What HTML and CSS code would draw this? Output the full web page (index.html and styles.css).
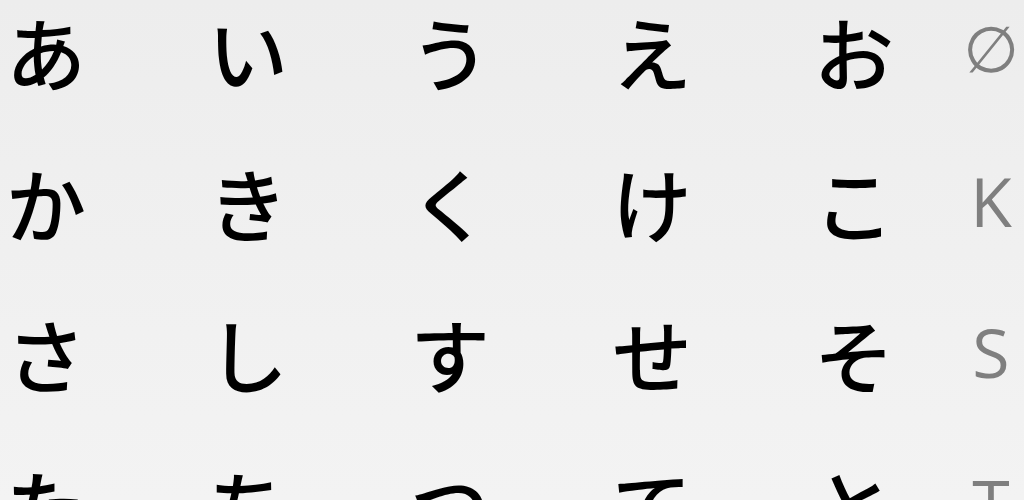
FILE: index.html
```html
<!DOCTYPE html>
<html lang="ja">
<head>
    <meta charset="UTF-8">
    <meta name="viewport" content="width=device-width, initial-scale=1.0">
    <title>Hiragana</title>
    <link rel="stylesheet" href="styles.css">
</head>
<body>
    <div class="kana-grid">
        <div class="row">
            <span class="kana">あ</span>
            <span class="kana">い</span>
            <span class="kana">う</span>
            <span class="kana">え</span>
            <span class="kana">お</span>
            <span class="consonant empty">∅</span>
        </div>
        <div class="row">
            <span class="kana">か</span>
            <span class="kana">き</span>
            <span class="kana">く</span>
            <span class="kana">け</span>
            <span class="kana">こ</span>
            <span class="consonant">K</span>
        </div>
        <div class="row">
            <span class="kana">さ</span>
            <span class="kana">し</span>
            <span class="kana">す</span>
            <span class="kana">せ</span>
            <span class="kana">そ</span>
            <span class="consonant">S</span>
        </div>
        <div class="row">
            <span class="kana">た</span>
            <span class="kana">ち</span>
            <span class="kana">つ</span>
            <span class="kana">て</span>
            <span class="kana">と</span>
            <span class="consonant">T</span>
        </div>
    </div>
</body>
</html>
```

FILE: styles.css
```css
html, body {
    height: 100%;
}
body {
    margin: 0;
    overflow: hidden;
    background: linear-gradient(to bottom, #ededed, #f3f3f3);
    font-family: "Noto Sans CJK JP", "Noto Sans", sans-serif;
}
.kana-grid {
    display: flex;
    flex-direction: column;
    margin-top: -26px;
}
.row {
    display: grid;
    grid-template-columns: repeat(4, 202px) 140px 1fr;
    align-items: center;
    height: 151px;
}
.kana {
    padding-left: 6px;
    font-size: 80px;
    font-weight: 500;
    line-height: 110px;
    color: #000;
}
.consonant {
    text-align: center;
    padding-left: 10px;
    font-family: "Open Sans", "DejaVu Sans", sans-serif;
    font-size: 68px;
    line-height: 110px;
    color: #7f7f7f;
}
.empty {
    font-family: "DejaVu Sans", sans-serif;
    font-size: 64px;
}
```
